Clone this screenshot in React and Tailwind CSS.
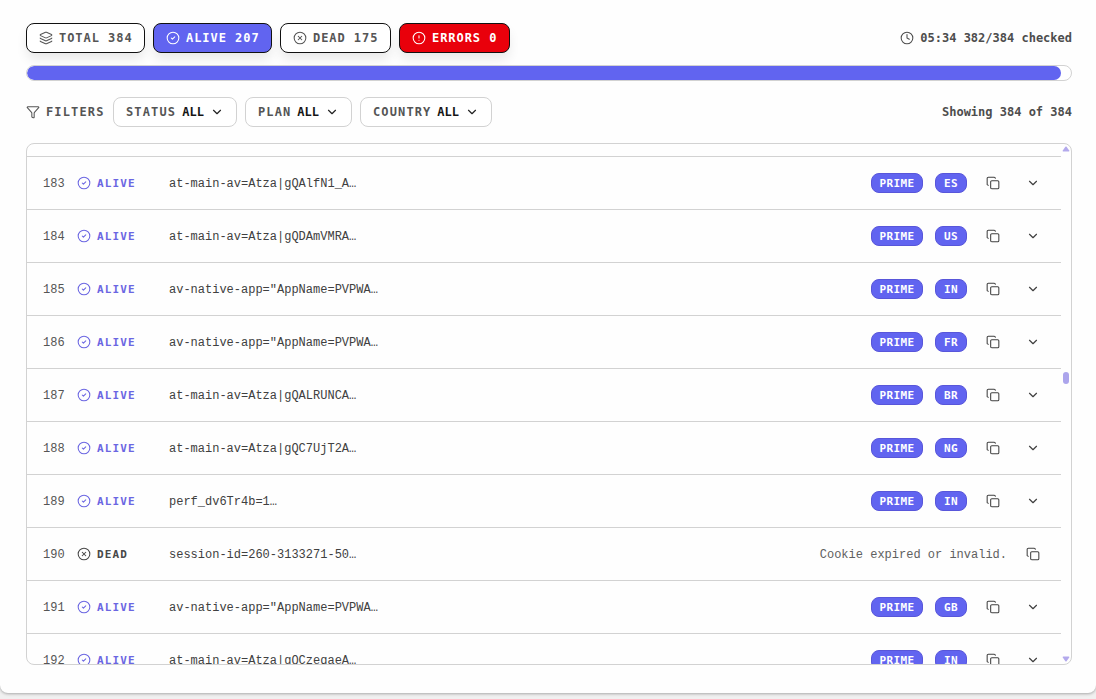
import React from "react";
import { Layers, CircleCheck, CircleX, CircleAlert, Clock, Funnel, ChevronDown, Copy } from "lucide-react";

const ROWS = [
  [183, "at-main-av=Atza|gQAlfN1_A…", "ES"],
  [184, "at-main-av=Atza|gQDAmVMRA…", "US"],
  [185, 'av-native-app="AppName=PVPWA…', "IN"],
  [186, 'av-native-app="AppName=PVPWA…', "FR"],
  [187, "at-main-av=Atza|gQALRUNCA…", "BR"],
  [188, "at-main-av=Atza|gQC7UjT2A…", "NG"],
  [189, "perf_dv6Tr4b=1…", "IN"],
  [190, "session-id=260-3133271-50…", null],
  [191, 'av-native-app="AppName=PVPWA…', "GB"],
  [192, "at-main-av=Atza|gQCzeqaeA…", "IN"],
];

function Stat({ icon: Icon, label, className }) {
  return (
    <div
      className={`flex h-[30px] items-center gap-1.5 rounded-lg border border-[#111] pl-3 font-bold tracking-[0.95px] shadow-[0_7px_12px_-1px_rgba(0,0,0,0.09)] ${className}`}
    >
      <Icon size={14} strokeWidth={1.8} />
      <span className="whitespace-pre">{label}</span>
    </div>
  );
}

function Filter({ label, className }) {
  return (
    <button
      className={`flex h-[30px] items-center justify-between rounded-lg border border-[#d2d2d2] bg-white px-[12px] font-bold ${className}`}
    >
      <span className="tracking-[1.12px] text-[#555]">{label}</span>
      <span className="text-[#151515]">ALL</span>
      <ChevronDown size={14} strokeWidth={2} className="text-[#222]" />
    </button>
  );
}

function Badge({ children, className }) {
  return (
    <span
      className={`flex h-5 items-center justify-center rounded-[8px] border border-[#5856da] bg-[#6164f0] pt-px text-[11px] font-bold tracking-[0.03em] text-white ${className}`}
    >
      {children}
    </span>
  );
}

function Row({ id, text, country }) {
  const alive = country !== null;
  const Icon = alive ? CircleCheck : CircleX;
  return (
    <div className="flex h-[53px] shrink-0 items-center border-b border-[#d2d2d2] pl-4 pr-[21px] text-[#404040]">
      <span className="w-[34px] pt-px font-['Liberation_Mono',monospace] text-[#555]">{id}</span>
      <div className={`flex w-[92px] items-center gap-1.5 ${alive ? "text-[#6b66e2]" : "text-[#484848]"}`}>
        <Icon size={14} strokeWidth={1.8} />
        <span className="pt-px text-[11px] font-bold tracking-[0.1em]">{alive ? "ALIVE" : "DEAD"}</span>
      </div>
      <span className="flex-1 whitespace-pre pt-px font-['Liberation_Mono',monospace]">{text}</span>
      {alive ? (
        <div className="flex items-center">
          <Badge className="w-[52px]">PRIME</Badge>
          <Badge className="ml-3 w-8">{country}</Badge>
          <Copy size={14} strokeWidth={1.8} className="ml-[19px]" />
          <ChevronDown size={14} strokeWidth={2} className="ml-[26px]" />
        </div>
      ) : (
        <div className="flex items-center gap-[19px]">
          <span className="pt-px font-['Liberation_Mono',monospace] text-[#606060]">Cookie expired or invalid.</span>
          <Copy size={14} strokeWidth={1.8} />
        </div>
      )}
    </div>
  );
}

export default function App() {
  return (
    <div className="h-[699px] w-[1096px] overflow-hidden bg-[#f0f0f0] font-['DejaVu_Sans_Mono','Liberation_Mono',monospace] text-[12px] leading-4">
      <main className="flex h-[693px] flex-col rounded-b-[8px] bg-[#fefefe] pl-[26px] pr-6 pt-[23px] shadow-[0_1px_3px_rgba(0,0,0,0.3)]">
        <header className="flex h-[30px] items-center justify-between">
          <div className="flex gap-2">
            <Stat icon={Layers} label="TOTAL 384" className="w-[119px] bg-white text-[#555]" />
            <Stat icon={CircleCheck} label="ALIVE 207" className="w-[119px] bg-[#6164f0] text-white" />
            <Stat icon={CircleX} label="DEAD 175" className="w-[111px] bg-white text-[#555]" />
            <Stat icon={CircleAlert} label="ERRORS 0" className="w-[111px] bg-[#e9000b] text-white" />
          </div>
          <div className="flex items-center gap-1.5 font-bold text-[#4d4d4d]">
            <Clock size={14} strokeWidth={1.8} />
            <span>05:34 382/384 checked</span>
          </div>
        </header>

        <div className="mt-3 h-4 shrink-0 overflow-hidden rounded-full border border-[#d2d2d2] bg-white">
          <div className="h-full w-[1034px] rounded-full bg-[#6164f0]" />
        </div>

        <div className="mt-4 flex h-[30px] shrink-0 items-center justify-between">
          <div className="flex items-center gap-2">
            <div className="flex w-[79px] items-center gap-1.5 font-bold tracking-[1.15px] text-[#555]">
              <Funnel size={14} strokeWidth={1.8} className="shrink-0" />
              <span>FILTERS</span>
            </div>
            <Filter label="STATUS" className="w-[124px]" />
            <Filter label="PLAN" className="w-[107px]" />
            <Filter label="COUNTRY" className="w-[132px]" />
          </div>
          <span className="font-bold text-[#4d4d4d]">Showing 384 of 384</span>
        </div>

        <section className="mt-4 flex h-[522px] shrink-0 overflow-hidden rounded-lg border border-[#d2d2d2] bg-[#fefefe]">
          <div className="flex flex-1 flex-col">
            <div className="h-[13px] shrink-0 border-b border-[#d2d2d2]" />
            {ROWS.map(([id, text, country]) => (
              <Row key={id} id={id} text={text} country={country} />
            ))}
          </div>
          <div className="flex w-[10px] flex-col items-center pb-[2px] pt-[2px]">
            <svg width="8" height="6" viewBox="0 0 8 6" className="shrink-0">
              <path d="M3.4 0.8Q4 0 4.6 0.8L7.2 4.4Q7.6 5.6 6.5 5.6H1.5Q.4 5.6.8 4.4Z" fill="#b3a9ec" />
            </svg>
            <div className="mt-[220px] h-3 w-1.5 shrink-0 rounded-full bg-[#aca5ec]" />
            <svg width="8" height="6" viewBox="0 0 8 6" className="mt-auto shrink-0">
              <path d="M3.4 5.2Q4 6 4.6 5.2L7.2 1.6Q7.6.4 6.5.4H1.5Q.4.4.8 1.6Z" fill="#b3a9ec" />
            </svg>
          </div>
        </section>
      </main>
    </div>
  );
}
